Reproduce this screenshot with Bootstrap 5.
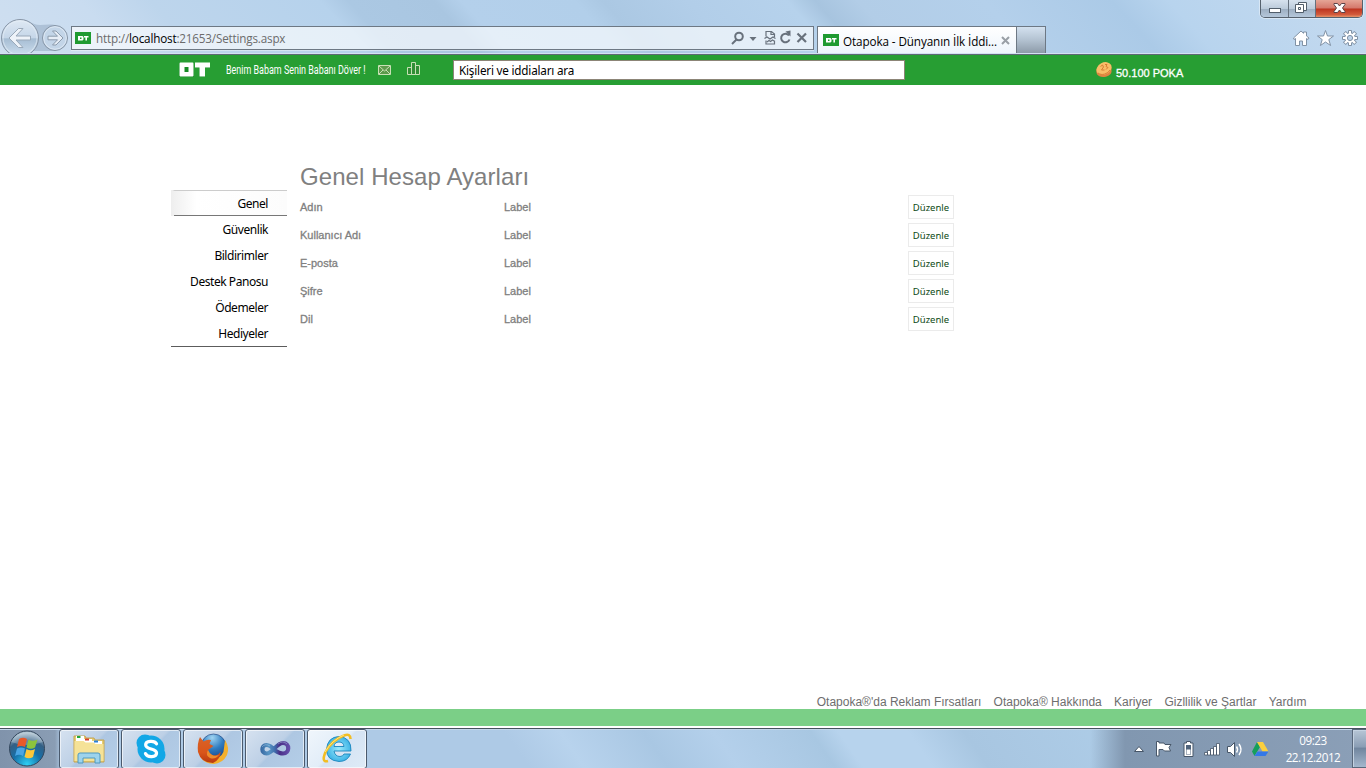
<!DOCTYPE html>
<html lang="tr">
<head>
<meta charset="utf-8">
<title>Otapoka - Dünyanın İlk İddia Sitesi</title>
<link href="https://cdn.jsdelivr.net/npm/bootstrap@5.3.0/dist/css/bootstrap.min.css" rel="stylesheet">
<style>
html,body{height:100%;overflow:hidden}
body{font-family:"Liberation Sans",Arial,sans-serif;font-size:11px;line-height:14px;color:#808080;background:#fff}
svg{display:block;flex:none}
.ui{font-family:"Open Sans","Noto Sans",sans-serif}
.tah{font-family:"Noto Sans",sans-serif}
/* browser frame */
.frame{height:55px;border-bottom:1px solid #5d6975;box-shadow:inset 0 -1px #d3e2f2;background:linear-gradient(48deg,#cfdff0 0,#c9dcf0 9%,#bdd5ec 14%,#b6d2ec 26%,#abc8e3 28%,#a9c6e1 34%,#b4d0eb 36%,#b2cfea 44%,#abc8e3 46%,#b2cee9 52%,#b6d2ec 59%,#a7c4df 61%,#b2cde7 64%,#b4d0eb 73%,#abcae7 82%,#b8d4ee 86%,#c5daef 100%)}
.address{width:743px;height:24px;margin-top:26px;border:1px solid #6d7884;background:rgba(255,255,255,.65);box-shadow:0 1px rgba(255,255,255,.4)}
.url{font-size:11.7px;margin-left:5px;color:#6b6b6b;letter-spacing:-.18px}
.url b{font-weight:400;color:#000}
.tab-on{width:200px;height:27px;margin:26px 0 0 3px;border:1px solid #6d7884;border-bottom:0;background:linear-gradient(#fff,#eef5fc)}
.tab-on span{font-size:11.7px;color:#000;margin-left:4px;width:158px;white-space:nowrap;letter-spacing:-.1px;padding-top:1px}
.tab-new{width:29px;height:27px;margin-top:26px;border:1px solid #6d7884;border-left:0;border-bottom:0;background:linear-gradient(#d3e1ef,#b3c2d1 50%,#8d9ba9)}
.winctl{top:0;right:3px;height:18px;border:1px solid #56616d;border-top:0;border-radius:0 0 5px 5px;overflow:hidden;box-shadow:0 0 0 1px rgba(255,255,255,.4)}
.winctl div{height:17px;background:linear-gradient(#d7e2ee,#bccbdb 50%,#9cadc0 52%,#b5c7da);border-right:1px solid #66717e}
.winctl div:last-child{border:0;background:linear-gradient(#e5a596,#d4776a 48%,#bc3420 52%,#d2593b 85%,#e69369)}
/* site header */
.topbar{height:30px;background:#279e33;color:#fff}
.tagline{width:141px;margin-left:16px}
.tagline span{display:inline-block;font-family:"Roboto",sans-serif;font-size:12.5px;white-space:nowrap;transform-origin:0 50%;transform:scaleX(.716)}
.search{width:452px;height:20px;margin-left:24px;border:1px solid #8c8577;background:#fff;color:#000;font-size:11.7px;padding-left:5px;letter-spacing:-.2px}
.thick{-webkit-text-stroke:.3px currentColor}
/* settings */
.side{width:116px;margin-left:171px;margin-top:105px;border-bottom:1px solid #5c5c5c;height:157px}
.side a.item{display:block;height:26px;line-height:28px;padding-right:19px;text-align:right;color:#000;text-decoration:none;font-size:12px;letter-spacing:-.45px}
.side a.on{border:solid;border-width:1px 0 0;border-image:linear-gradient(90deg,#eee 2%,#ccc 4%) 1;background:linear-gradient(90deg,#eee,#fff 22%,#fcfcfc);line-height:26px;position:relative}
.side a.on::after{content:"";position:absolute;left:3px;right:0;bottom:0;height:1px;background:#777}
.panel{margin-left:13px;margin-top:76px;width:670px}
.panel h1{font-size:24px;line-height:32px;margin:0;font-weight:400;letter-spacing:.08px}
.line{height:28px}
.c1{width:204px}.c2{width:404px}
.edit{width:46px;height:24px;border:1px solid #ebebeb;border-radius:0;padding:1px 0 0;font-size:9.5px;line-height:21px;color:#0c4a14;background:#fff;-webkit-text-stroke:0}
.foot{gap:12.3px;font-size:12px;line-height:16px;padding-right:59.500px;color:#6e6e6e;padding-top:1px;margin-bottom:-1px}
.stripe{height:17px;background:#7bcf87;margin-bottom:2px}
/* taskbar */
.taskbar{height:40px;border-top:1px solid #46525e;box-shadow:inset 0 1px #c4d8eb;background:linear-gradient(90deg,#8093ab 0,#8a9db4 55px,transparent 62px,transparent 1090px,#8197b0 1125px,#8b9fb7 1366px),linear-gradient(55deg,#aecae6 38%,#b8d3ed 42%,#a9c7e3 48%,#b4d0eb 53%,#a8c7e2 60%,#b7d3ed 62%,#b7d3ed 67%,#a8c6e1 71%,#afcee9 85%)}
.task{width:60px;height:40px;margin-right:2px;border:1px solid #4b5a6d;border-radius:3px;background:linear-gradient(135deg,#d6e2f0,#bdd0e6 48%,#aec7e2 52%,#b4cee8);box-shadow:inset 0 0 0 1px rgba(255,255,255,.6)}
.task.now{background:linear-gradient(135deg,#f0f6fc,#e2edf8 48%,#d5e3f3 52%,#deebf7)}
.clock{width:70px;margin-left:7px;margin-right:2px;color:#fff;font-size:11.7px;line-height:17px;letter-spacing:-.5px}
.peek{width:14px;height:39px;margin-left:2px;border:1px solid #59687b;border-right:0;background:linear-gradient(#b7c6d6,#8b9eb5 45%,#71869f 50%,#a4b7cd);box-shadow:inset 1px 1px #c4d2e1}
</style>
</head>
<body class="d-flex flex-column">
<svg width="0" height="0" class="position-absolute"><defs>
<linearGradient id="gl" x2="0" y2="1"><stop offset="0" stop-color="#dfe9f4"/><stop offset=".5" stop-color="#c5d6e8"/><stop offset=".52" stop-color="#a6bdd3"/><stop offset="1" stop-color="#cfe0f0"/></linearGradient>
<radialGradient id="orb" cx=".5" cy=".95" r=".9"><stop offset="0" stop-color="#2fd0f4"/><stop offset=".45" stop-color="#1670a9"/><stop offset=".75" stop-color="#345f84"/><stop offset="1" stop-color="#a8bfce"/></radialGradient>
<linearGradient id="vs" gradientUnits="userSpaceOnUse" x1="2" x2="32"><stop offset="0" stop-color="#34649f"/><stop offset=".3" stop-color="#5795c4"/><stop offset=".5" stop-color="#3f6cab"/><stop offset=".65" stop-color="#4a2f87"/><stop offset="1" stop-color="#6750ad"/></linearGradient>
<linearGradient id="ff" x2="0" y2="1"><stop offset="0" stop-color="#d96327"/><stop offset=".6" stop-color="#d9551a"/><stop offset="1" stop-color="#b8390f"/></linearGradient>
<radialGradient id="ie"><stop offset="0" stop-color="#9beafc"/><stop offset="1" stop-color="#3fb4e6"/></radialGradient>
<radialGradient id="globe" cx=".45" cy=".15" r=".9"><stop offset="0" stop-color="#9fd4f2"/><stop offset=".5" stop-color="#2f7cc0"/><stop offset="1" stop-color="#163f83"/></radialGradient>
<symbol id="ot" viewBox="0 0 16 12"><path fill="#1f9a31" d="M0 0h16v12H0z"/><path fill="#fff" fill-rule="evenodd" d="M3 4h4.500l1 1v2.500l-1 1H3zM5 5.500V7h1.500V5.500zM9 4h4.500v1.600H12v2.900h-1.600V5.600H9z"/></symbol>
</defs></svg>

<div class="frame d-flex position-relative flex-shrink-0">
  <svg width="71" height="53" viewBox="0 0 71 53">
    <path d="M20 19c9 0 11 6 20 6 5 0 9-1 15 0v26H20z" fill="#8fa6bd" opacity=".5"/>
    <circle cx="20" cy="38" r="18.500" fill="url(#gl)" stroke="#8896a7"/><circle cx="20" cy="38" r="17" fill="none" stroke="#e6eef7" opacity=".7"/>
    <circle cx="55" cy="38" r="12.500" fill="#c3d5e8" stroke="#8594a5"/><circle cx="55" cy="38" r="11.300" fill="none" stroke="#e3ecf6" opacity=".8"/>
    <path d="M9 38l9.500-9.500h4.500l-7 7.500h14.500v4H16l7 7.500h-4.500z" fill="#eef3f9" stroke="#9aa9b9"/>
    <path d="M63 38l-7-7h-3.500l5 5.200H48v3.600h9.500l-5 5.200H56z" fill="#e6edf6" stroke="#8c9bac"/>
  </svg>
  <div class="address d-flex align-items-center flex-shrink-0">
    <svg width="16" height="12" style="margin-left:3px"><use href="#ot"/></svg>
    <span class="url ui">http://<b>localhost</b>:21653/Settings.aspx</span>
    <svg class="ms-auto" width="83" height="22" viewBox="0 0 83 22" fill="none" stroke="#68717c" stroke-width="2">
      <circle cx="9" cy="9.500" r="3.800"/><path d="M6.500 12.500L2 17"/><path d="M19.500 10h7L23 14z" fill="#68717c" stroke="none"/>
      <path d="M36 9.500v-5h5.500l3 2.500v3M36 13.500v3.500h8.500v-3.500M41 5v2.500h3M34.500 11.500l2.500-1.500 3 2 3-2 2.500 1.500M37 15l2-1.500 1.500 1 2-1.500 1.500 1" stroke-width="1.200"/>
      <path d="M59 8.500A4.300 4.300 0 1 0 59.500 12.500"/><path d="M55.500 4.500l5-1v6z" fill="#68717c" stroke="none"/><path d="M67.500 6.500l8.500 8.500M76 6.500l-8.500 8.500" stroke-width="2.200"/>
    </svg>
  </div>
  <div class="tab-on d-flex align-items-center flex-shrink-0">
    <svg width="16" height="12" style="margin-left:5px"><use href="#ot"/></svg>
    <span class="ui">Otapoka - Dünyanın İlk İddi...</span>
    <svg width="9" height="9" viewBox="0 0 9 9" stroke="#999fa6" stroke-width="2"><path d="M1 1l7 7M8 1L1 8"/></svg>
  </div>
  <div class="tab-new"></div>
  <svg class="ms-auto" width="75" height="53" viewBox="1291 0 75 53" fill="#fff" stroke="#8192a5">
    <path d="M1293.500 38l7.500-7 2.500 2.300V32h3v4l2.500 2-1 1.500-1.500-1v7h-4V41h-3v4.500h-4v-7l-1.500 1z"/>
    <path d="M1325.500 30.500l2 5.500h6l-4.700 3.600 1.800 5.900-5.100-3.500-5.100 3.500 1.800-5.900-4.700-3.600h6z"/>
    <path id="teeth" d="M1348.500 30.500h3v15h-3zM1342.500 36.500h15v3h-15z"/><use href="#teeth" transform="rotate(45 1350 38)"/><circle cx="1350" cy="38" r="5.300"/><path d="M1349 31h2v14h-2zM1343 37h14v2h-14z" stroke="none"/><path d="M1349 31h2v14h-2zM1343 37h14v2h-14z" stroke="none" transform="rotate(45 1350 38)"/><circle cx="1350" cy="38" r="2.600" fill="#bed3e9"/>
  </svg>
  <div class="winctl position-absolute d-flex">
    <div><svg width="27" height="17" viewBox="0 0 27 17"><rect x="8.500" y="8.500" width="11" height="4" fill="#fff" stroke="#525e6b"/></svg></div>
    <div><svg width="26" height="17" viewBox="0 0 26 17" fill="#fff" stroke="#525e6b"><path d="M9.500 2.500h8v8h-8z"/><path fill-rule="evenodd" d="M6.500 4.500h8v8h-8zM9.500 7.500v2h2v-2z"/></svg></div>
    <div><svg width="46" height="17" viewBox="0 0 46 17"><path d="M18 3.500h3.500L23.500 6l2-2.500H29v1L26.500 8l2.500 3.500v1h-3.500l-2-2.500-2 2.500H18v-1L20.500 8 18 4.500z" fill="#fff" stroke="#5b4348"/></svg></div>
  </div>
</div>

<header class="topbar d-flex align-items-center flex-shrink-0">
  <svg width="32" height="18" viewBox="0 0 32 18" style="margin-left:178px"><path d="M1 2h15v14H1zM17 2h15v5h-5v9h-6V7h-4z" fill="#178b26"/><path fill="#fff" fill-rule="evenodd" d="M2.500 1.500h12q1 0 1 1v12q0 1-1 1h-12q-1 0-1-1v-12q0-1 1-1zM6.500 6v5h4V6zM17 1.500h15v5h-5v9h-5.500v-9H17z"/></svg>
  <div class="tagline"><span>Benim Babam Senin Babanı Döver !</span></div>
  <svg width="62" height="20" viewBox="0 0 62 20" fill="none" stroke="#c8e0b5"><path d="M11.500 5.500h12v9h-12z" fill="#5c9a4c"/><path d="M12 6l5.500 5L23 6M12 14l4-4M23 14l-4-4"/><path d="M40.500 7.500h4v7h-4zM44.500 2.500h4v12h-4zM48.500 5.500h4v9h-4z" fill="#318f35"/></svg>
  <div class="search d-flex align-items-center tah">Kişileri ve iddiaları ara</div>
  <svg width="18" height="18" viewBox="0 0 18 18" style="margin-left:190px"><path d="M1.500 8v4C3 18 15 17 16.500 11V6z" fill="#e08442"/><ellipse cx="9" cy="7.500" rx="7.900" ry="6" transform="rotate(-28 9 7.500)" fill="#f8bd68"/><path d="M5.500 5.500l2-1.500 1 2-2 3h3M10 3.500h2l-1 2 2 1-2 2M3 12c4 3 9 1 12-3" fill="none" stroke="#d2752e" stroke-width=".9"/></svg>
  <span class="thick" style="margin:6px 0 0 3px">50.100 POKA</span>
</header>

<main class="d-flex align-items-start flex-grow-1">
  <nav class="side tah"><a class="item on">Genel</a><a class="item">Güvenlik</a><a class="item">Bildirimler</a><a class="item">Destek Panosu</a><a class="item">Ödemeler</a><a class="item">Hediyeler</a></nav>
  <section class="panel">
    <h1>Genel Hesap Ayarları</h1>
    <div class="line d-flex align-items-center thick"><span class="c1">Adın</span><span class="c2">Label</span><button class="edit btn tah">Düzenle</button></div>
    <div class="line d-flex align-items-center thick"><span class="c1">Kullanıcı Adı</span><span class="c2">Label</span><button class="edit btn tah">Düzenle</button></div>
    <div class="line d-flex align-items-center thick"><span class="c1">E-posta</span><span class="c2">Label</span><button class="edit btn tah">Düzenle</button></div>
    <div class="line d-flex align-items-center thick"><span class="c1">Şifre</span><span class="c2">Label</span><button class="edit btn tah">Düzenle</button></div>
    <div class="line d-flex align-items-center thick"><span class="c1">Dil</span><span class="c2">Label</span><button class="edit btn tah">Düzenle</button></div>
  </section>
</main>
<footer class="flex-shrink-0">
  <div class="foot d-flex justify-content-end"><span>Otapoka®'da Reklam Fırsatları</span><span>Otapoka® Hakkında</span><span>Kariyer</span><span>Gizllilik ve Şartlar</span><span>Yardım</span></div>
  <div class="stripe"></div>
</footer>

<div class="taskbar d-flex flex-shrink-0">
  <svg width="59" height="39" viewBox="0 0 59 39"><circle cx="27" cy="19.500" r="17.500" fill="url(#orb)" stroke="#34475d"/><path d="M11 13a18 18 0 0 1 32 0q-16 6-32 0z" fill="#fff" opacity=".25"/>
    <path d="M19 10q4-2.500 8 0l-2 8q-4-2-8 0z" fill="#e8592a"/><path d="M28.500 10.500q4 2.500 9 0l-2.500 8q-4 2.500-8.500 0z" fill="#8cc43d"/><path d="M17 19.500q4-2 8 0l-2 7.500q-4-2.500-8 0z" fill="#4aa5e4"/><path d="M26.500 20q4 2.500 8.500 0l-2 8q-4 2.500-8.500 0z" fill="#fcc73a"/></svg>
  <div class="task d-flex align-items-center justify-content-center"><svg width="34" height="32" viewBox="0 0 34 32"><path d="M2 3h11l1 2h8l1 2h9v22H2z" fill="#e8cf73" stroke="#c4a452"/><path d="M4 3h8v3h8v2h10v3H4z" fill="#fff"/><path d="M5 3h3.500v2H5z" fill="#22a83a"/><path d="M13 5.500h4v2h-4z" fill="#d7402b"/><path d="M22 7.500h4v2h-4z" fill="#2a7fd6"/><path d="M2.500 8h9l2 1.500h8l2 1.500h8v17h-29z" fill="#f5e297"/><path d="M6 30v-8q0-2 2-2h18q2 0 2 2v8h-5v-5H11v5z" fill="#9dd3ec" stroke="#4f99c0"/></svg></div>
  <div class="task d-flex align-items-center justify-content-center"><svg width="30" height="30" viewBox="0 0 30 30"><circle cx="9" cy="9" r="8.500" fill="#12a7e6"/><circle cx="21" cy="21" r="8.500" fill="#12a7e6"/><circle cx="15" cy="15" r="13.500" fill="#12a7e6"/><path d="M20.500 9.800C18.500 6.300 9.500 6.600 9.700 11c.2 5 10.800 3 10.800 8 0 4.500-9 5-11 .6" fill="none" stroke="#fff" stroke-width="3.300" stroke-linecap="round"/></svg></div>
  <div class="task d-flex align-items-center justify-content-center"><svg width="34" height="34" viewBox="0 0 34 34"><circle cx="17.500" cy="14.500" r="12.500" fill="url(#globe)" stroke="#173b78" stroke-width=".6"/><path d="M29 8q5 8 2 15-4 8-13 9-8 0-13-6l14 1q9-3 9-11z" fill="#f3b02c"/><path d="M4 5l3.500 4.500Q11 7 15 8l-1.500 4 4 2-5.500 4q1 6 7 5.500 4-.5 5.500-4Q25 27 17 31 5 31 2 20 1 11 4 5z" fill="url(#ff)"/><path d="M12 18q-3 5 2 8 5 2 9-3-7 3-11-5z" fill="#ef8b2a"/></svg></div>
  <div class="task d-flex align-items-center justify-content-center"><svg width="34" height="22" viewBox="0 0 34 22" fill="none"><path d="M17 12.500C14 9 11.500 7 8.500 7c-5.500 0-5.500 8.500 0 8.500 6.500 0 9.500-10.500 16.500-10.500 7 0 7 10.500 0 10.500-3 0-5-1-8-3z" stroke="url(#vs)" stroke-width="4.200"/><path d="M4 9q3-4 8-1M20 6q5-4 9 0" stroke="#bfdff4" opacity=".4"/></svg></div>
  <div class="task now d-flex align-items-center justify-content-center"><svg width="34" height="34" viewBox="0 0 34 34" fill="none"><path d="M30.500 22q-3 7.500-11.500 7.500Q6.500 28.500 6.500 17.500 7.500 5 19 4.500q12.500 1 12 14.500H14q1 5.500 6 5.500 3 0 4-2.500zM14 14.500h10Q23.500 10 19 10t-5 4.500z" fill="url(#ie)" stroke="#1b86bd" stroke-width=".9" fill-rule="evenodd"/><path d="M30.500 7q0-6-6.500-3.500Q12 8 5.500 20q-4.500 11 2.500 9" stroke="#f2bd23" stroke-width="2.600"/><path d="M24 3Q12 8 5 20" stroke="#fff29a" stroke-width=".8"/></svg></div>
  <div class="d-flex align-items-center ms-auto">
    <svg width="140" height="24" viewBox="1131 0 140 24" fill="#fff" stroke="#475668">
      <path d="M1134.500 14.500l4.500-5 4.500 5z"/>
      <path d="M1156.500 4.500h2.500V6h5l1 1.500h6l-2 3 1.500 3.500h-6l-1.500-1.500h-4V19h-2.500z"/>
      <path d="M1186.500 4.500h4V6h2.500v13.500h-9V6h2.500z"/><path d="M1186 8h5v9.500h-5z" fill="#50647c" stroke="none"/><path d="M1186.500 12.500h4v4.500h-4z" stroke="none"/>
      <path d="M1204.500 15.500h3v2.500h-3zM1207.500 13.500h3v4.500h-3zM1210.500 11.500h3v6.500h-3zM1213.500 9.500h3v8.500h-3zM1216.500 6.500h3v11.500h-3z" stroke-width=".8"/>
      <path d="M1227.500 9.500h3l4-4v14l-4-4h-3z"/><path d="M1236.500 9.500q2 3 0 6M1239 7q4 5.500 0 11" fill="none" stroke="#fff" stroke-width="1.500"/>
      <g stroke="none"><path d="M1257 5l3 5-5.500 9-2.500-4.500z" fill="#169f5b"/><path d="M1257 5h6l5.500 9.500h-6z" fill="#fbcf3d"/><path d="M1257.500 14.500h11l-3 4.500h-11z" fill="#3478e8"/></g>
    </svg>
    <div class="clock text-center ui">09:23<br>22.12.2012</div>
    <div class="peek"></div>
  </div>
</div>
<script src="https://cdn.jsdelivr.net/npm/bootstrap@5.3.0/dist/js/bootstrap.bundle.min.js"></script>
</body>
</html>
